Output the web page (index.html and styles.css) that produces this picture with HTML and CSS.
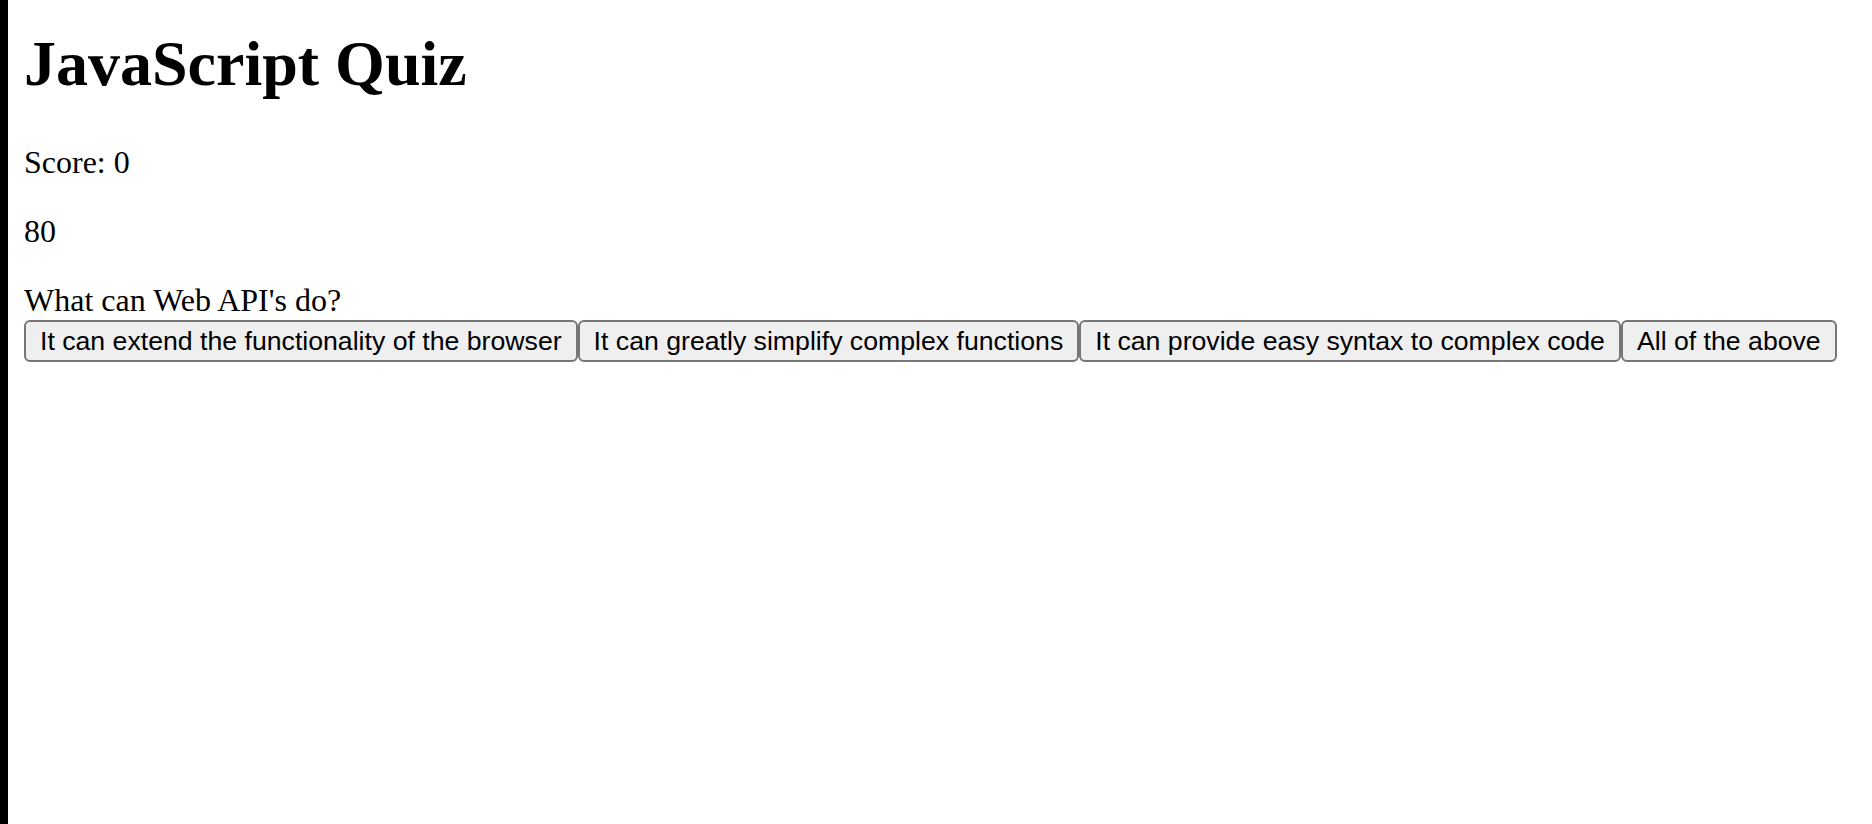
FILE: index.html
```html
<!DOCTYPE html>
<html lang="en">
<head>
<meta charset="utf-8">
<title>JavaScript Quiz</title>
<link rel="stylesheet" href="styles.css">
</head>
<body>
<h1 class="title">JavaScript Quiz</h1>
<p class="score">Score: 0</p>
<p class="timer">80</p>
<div class="question">What can Web API's do?</div>
<div class="choices"><button class="choice">It can extend the functionality of the browser</button><button class="choice">It can greatly simplify complex functions</button><button class="choice">It can provide easy syntax to complex code</button><button class="choice">All of the above</button></div>
</body>
</html>
```
FILE: styles.css
```css
html {
  border-left: 8px solid #000;
  min-height: 100%;
  box-sizing: border-box;
  background: #fff;
}
body {
  margin: 0 16px 16px;
  padding-top: 27px;
  font-family: "Liberation Serif", "Times New Roman", serif;
  font-size: 32px;
  color: #000;
}
.title {
  font-size: 64px;
  font-weight: bold;
  margin: 0 0 43px;
}
.score, .timer {
  margin: 32px 0;
}
.question {
  margin-top: 32px;
}
.choices {
  margin: 0;
}
.choice {
  font-family: "Liberation Sans", Arial, sans-serif;
  font-size: 26.67px;
  line-height: 31px;
  padding: 3.5px 14px;
  margin: 0;
  border: 2px solid #767676;
  border-radius: 6px;
  background: #efefef;
  color: #000;
  vertical-align: -1.5px;
}
```
